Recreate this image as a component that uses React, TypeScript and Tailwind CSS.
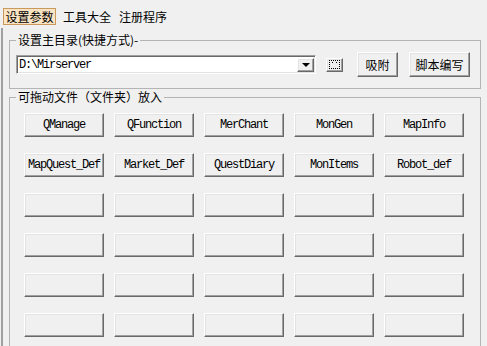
const cjk = "font-['Noto_Sans_CJK_SC','Microsoft_YaHei',sans-serif]";
const mono = "font-['Liberation_Mono',monospace] text-[12px] tracking-[-1.2px]";

const btn =
  "border border-t-white border-l-white border-r-[#696969] border-b-[#696969] bg-[#f0f0f0] shadow-[inset_-1px_-1px_0_#a0a0a0,inset_1px_1px_0_#e3e3e3]";

const names = [
  "QManage",
  "QFunction",
  "MerChant",
  "MonGen",
  "MapInfo",
  "MapQuest_Def",
  "Market_Def",
  "QuestDiary",
  "MonItems",
  "Robot_def",
];

export default function App() {
  const cells = [...names, ...Array(20).fill("")];

  return (
    <div className={`w-[487px] h-[346px] overflow-hidden bg-[#f0f0f0] text-black ${cjk}`}>
      {/* tabs */}
      <div className="h-[28px] flex items-start text-[12px] leading-[15px]">
        <div className="mt-[8px] ml-[3px] w-[53px] h-[17px] border border-[#c99a5b] bg-[#fbe4c3] flex items-center justify-center">
          设置参数
        </div>
        <span className="mt-[9px] ml-[7px]">工具大全</span>
        <span className="mt-[9px] ml-[8px]">注册程序</span>
      </div>

      {/* page */}
      <div className="ml-[1px] h-[318px] border-l-2 border-l-[#a0a0a0] pt-[5px]">
        <fieldset className="ml-[6px] w-[472px] border border-[#b4b4b4] px-[6px] pt-[5px] pb-[11px] text-[12px]">
          <legend className="px-[2px] leading-[14px]">设置主目录(快捷方式)-</legend>
          <div className="flex items-center h-[25px]">
            <div className="w-[300px] h-[19px] flex items-center justify-between bg-white border border-t-[#a0a0a0] border-l-[#a0a0a0] border-r-white border-b-white shadow-[inset_1px_1px_0_#696969,inset_-1px_-1px_0_#e3e3e3] pl-[2px] pr-[1px]">
              <span className={`${mono} leading-[14px]`}>D:\Mirserver</span>
              <div className={`w-[17px] h-[14px] flex items-center justify-center ${btn}`}>
                <div className="w-0 h-0 border-l-[4px] border-r-[4px] border-t-[4px] border-l-transparent border-r-transparent border-t-black" />
              </div>
            </div>
            <div className={`ml-[10px] w-[17px] h-[14px] flex items-center justify-center ${btn}`}>
              <div className="w-[11px] h-[9px] border border-dotted border-black flex items-start justify-center gap-[3px] pt-[1px]">
                <div className="w-[1px] h-[1px] bg-black" />
                <div className="w-[1px] h-[1px] bg-black" />
              </div>
            </div>
            <div className={`ml-[14px] w-[41px] h-[25px] flex items-center justify-center ${btn}`}>吸附</div>
            <div className={`ml-[11px] w-[61px] h-[25px] flex items-center justify-center ${btn}`}>脚本编写</div>
          </div>
        </fieldset>

        <fieldset className="mt-[1px] ml-[6px] w-[472px] h-[280px] border border-[#b4b4b4] px-[6px] pt-[9px] text-[12px]">
          <legend className="px-[2px] leading-[14px]">可拖动文件（文件夹）放入</legend>
          <div className="ml-[8px] grid grid-cols-[repeat(5,80px)] auto-rows-[24px] gap-x-[10px] gap-y-[16px]">
            {cells.map((n, i) => (
              <div key={i} className={`flex items-center justify-center ${btn}`}>
                <span className={`${mono} leading-[14px]`}>{n}</span>
              </div>
            ))}
          </div>
        </fieldset>
      </div>
    </div>
  );
}
